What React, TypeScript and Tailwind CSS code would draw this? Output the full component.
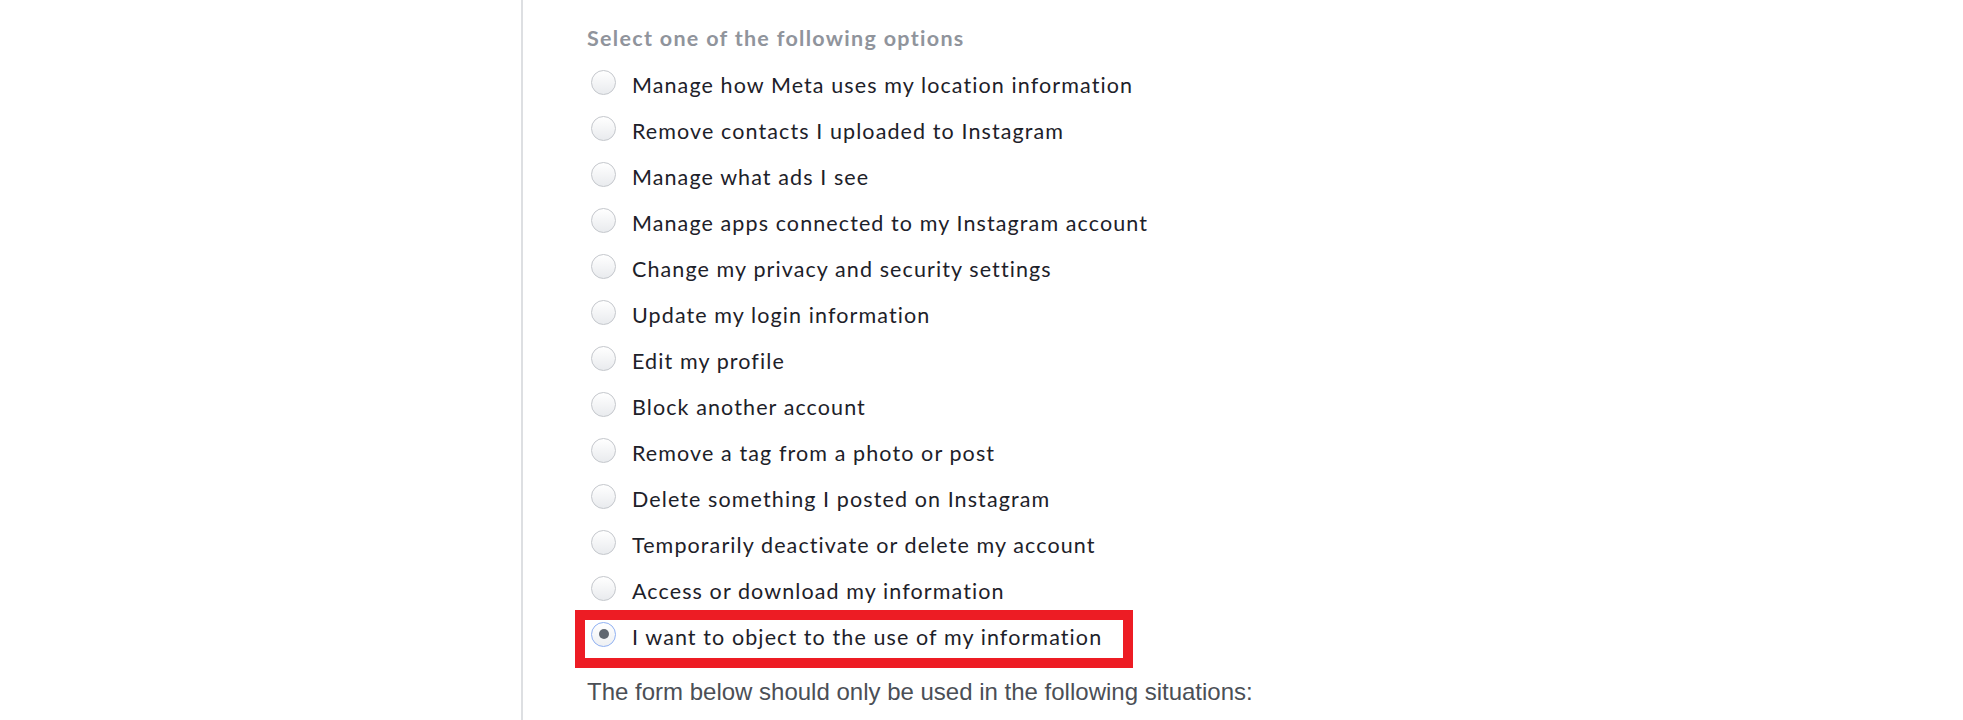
const options = [
  'Manage how Meta uses my location information',
  'Remove contacts I uploaded to Instagram',
  'Manage what ads I see',
  'Manage apps connected to my Instagram account',
  'Change my privacy and security settings',
  'Update my login information',
  'Edit my profile',
  'Block another account',
  'Remove a tag from a photo or post',
  'Delete something I posted on Instagram',
  'Temporarily deactivate or delete my account',
  'Access or download my information',
  'I want to object to the use of my information',
];

function Radio({ checked }: { checked: boolean }) {
  if (checked) {
    return (
      <span className="-mt-[6px] flex h-[25px] w-[25px] shrink-0 items-center justify-center rounded-full border border-[#8fb0f2] bg-gradient-to-b from-white to-[#eef0f3]">
        <span className="h-[10px] w-[10px] rounded-full bg-[#606770]" />
      </span>
    );
  }
  return (
    <span className="-mt-[6px] h-[25px] w-[25px] shrink-0 rounded-full border border-[#c4c7cc] bg-gradient-to-b from-white to-[#e9ebee]" />
  );
}

export default function App() {
  const selected = options.length - 1;

  return (
    <div className="flex min-h-[720px] w-full bg-white">
      <div className="w-[521px] shrink-0" />
      <div className="flex-1 border-l-2 border-[#dddfe2] pl-[64px] pt-[24px]">
        <h3 className="font-['Lato',sans-serif] text-[21.5px] font-bold leading-[28px] tracking-[1.3px] text-[#90949c]">
          Select one of the following options
        </h3>

        <ul className="mt-[10px]">
          {options.map((label, i) => (
            <li key={label} className="relative flex h-[46px] items-center gap-[16px] pl-[4px]">
              {i === selected && (
                <span className="pointer-events-none absolute -top-[4px] -bottom-[8px] -left-[12px] w-[558px] border-[10px] border-[#ed1c24]" />
              )}
              <Radio checked={i === selected} />
              <span className="font-['Lato',sans-serif] text-[21.5px] leading-[26px] tracking-[1.1px] text-[#1d2129]">
                {label}
              </span>
            </li>
          ))}
        </ul>

        <p className="mt-[18px] font-['Liberation_Sans',Arial,sans-serif] text-[24px] leading-[28px] text-[#4b4f56]">
          The form below should only be used in the following situations:
        </p>
      </div>
    </div>
  );
}
